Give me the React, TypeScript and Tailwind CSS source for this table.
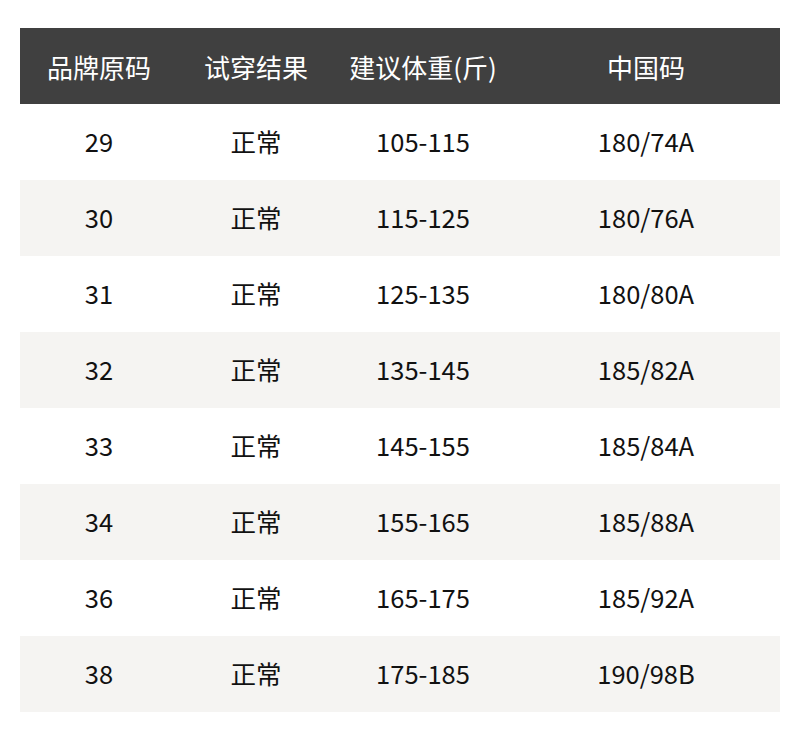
import React from 'react';

const rows = [
  ['29', '正常', '105-115', '180/74A'],
  ['30', '正常', '115-125', '180/76A'],
  ['31', '正常', '125-135', '180/80A'],
  ['32', '正常', '135-145', '185/82A'],
  ['33', '正常', '145-155', '185/84A'],
  ['34', '正常', '155-165', '185/88A'],
  ['36', '正常', '165-175', '185/92A'],
  ['38', '正常', '175-185', '190/98B'],
];

const headers = ['品牌原码', '试穿结果', '建议体重(斤)', '中国码'];

const cols = 'grid grid-cols-[158px_156px_178px_268px]';

const App: React.FC = () => {
  return (
    <div
      className="w-[800px] h-[740px] bg-white pt-[28px] px-[20px]"
      style={{ fontFamily: '"Noto Sans CJK SC", "Noto Sans", sans-serif' }}
    >
      <div className={`${cols} h-[76px] bg-[#404040] text-white text-[26px]`}>
        {headers.map((h) => (
          <div key={h} className="flex items-center justify-center">
            {h}
          </div>
        ))}
      </div>
      {rows.map((r, i) => (
        <div
          key={r[0]}
          className={`${cols} h-[76px] text-[25.5px] text-[#111] ${i % 2 === 1 ? 'bg-[#f5f4f2]' : 'bg-white'}`}
        >
          {r.map((c, j) => (
            <div key={j} className="flex items-center justify-center pb-[2px]">
              {c}
            </div>
          ))}
        </div>
      ))}
    </div>
  );
};

export default App;
